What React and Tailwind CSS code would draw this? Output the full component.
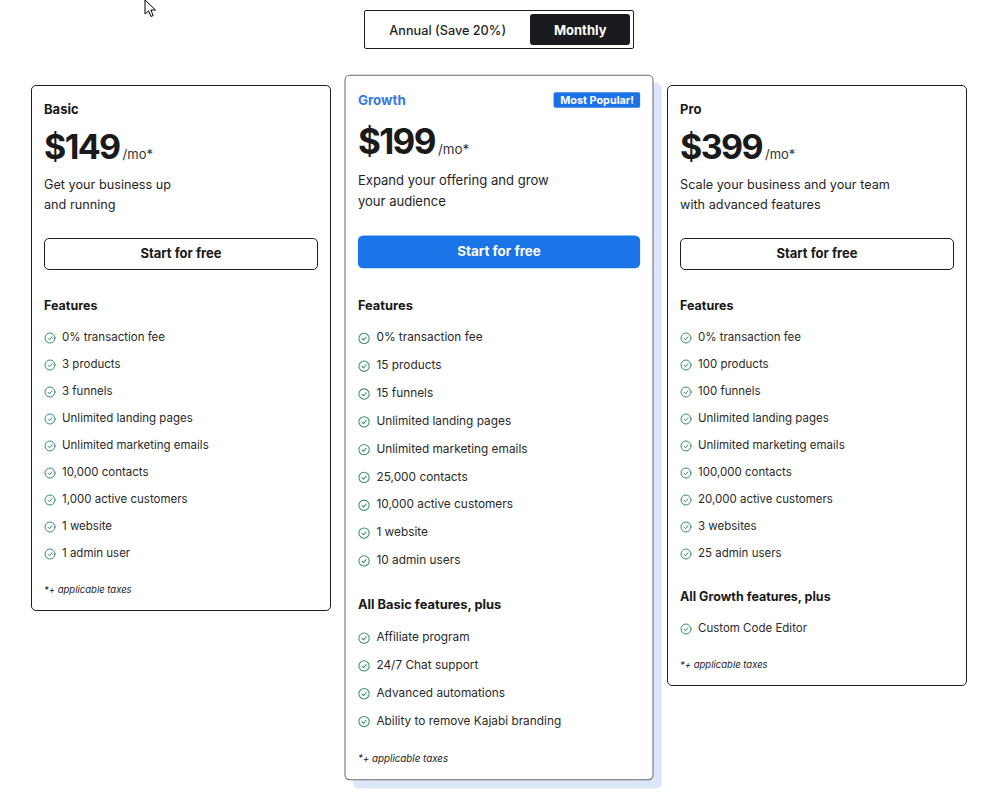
import React from "react";

const Check = () => (
  <svg width="12" height="12" viewBox="0 0 24 24" fill="none" stroke="#3b8c6e" strokeWidth="2" strokeLinecap="round" strokeLinejoin="round" className="shrink-0">
    <circle cx="12" cy="12" r="10" />
    <path d="m8 12.5 3 3 5-6" />
  </svg>
);

const Item = ({ children }) => (
  <li className="flex items-center gap-[6px] h-[20px] text-[11.5px] text-[#2a2a2a]">
    <Check />
    <span>{children}</span>
  </li>
);

const List = ({ items }) => (
  <ul className="mt-[12px] flex flex-col gap-[7px]">
    {items.map((t) => (
      <Item key={t}>{t}</Item>
    ))}
  </ul>
);

const Card = ({ name, price, desc, features, extraTitle, extra, featured }) => (
  <div
    className={
      "w-[300px] shrink-0 bg-white rounded-[5px] border px-[12px] pt-[13px] pb-[13px] flex flex-col " +
      (featured
        ? "border-[#6b6b6b] border-[1.5px] scale-[1.03] shadow-[8px_8px_0_#dce8f9]"
        : "border-[#1f1f1f]")
    }
  >
    {featured ? (
      <div className="flex items-center justify-between h-[23px] pb-[3px]">
        <span className="text-[13px] font-bold text-[#3a78e0] leading-[20px]">{name}</span>
        <span className="bg-[#1c73e8] text-white text-[10.5px] font-bold px-[6px] h-[15px] leading-[15px] rounded-[2px]">
          Most Popular!
        </span>
      </div>
    ) : (
      <div className="h-[20px] text-[13px] font-bold text-[#1a1a1a] leading-[20px]">{name}</div>
    )}
    <div className="mt-[8px] h-[40px] flex items-baseline">
      <span className="text-[34px] font-bold text-[#1a1a1a] leading-[40px] tracking-[-1.6px]">{price}</span>
      <span className="text-[13px] text-[#333] ml-[3px]">/mo*</span>
    </div>
    <p className="mt-[8px] text-[12.7px] leading-[20px] text-[#1f1f1f] whitespace-pre-line">{desc}</p>
    <button
      className={
        "mt-[23px] h-[32px] w-full rounded-[5px] text-[13px] font-bold " +
        (featured ? "bg-[#1c74e9] text-white" : "border border-[#1f1f1f] text-[#1a1a1a] bg-white")
      }
    >
      Start for free
    </button>
    <div className="mt-[26px] h-[20px] leading-[20px] text-[12.5px] font-bold text-[#1a1a1a]">Features</div>
    <List items={features} />
    {extraTitle && (
      <>
        <div className="mt-[23px] h-[20px] leading-[20px] text-[12.5px] font-bold text-[#1a1a1a]">{extraTitle}</div>
        <List items={extra} />
      </>
    )}
    <div className="mt-[19px] h-[14px] leading-[14px] text-[9.5px] italic text-[#222]">*+ applicable taxes</div>
  </div>
);

export default function App() {
  return (
    <div
      className="relative min-h-[807px] bg-white pt-[10px]"
      style={{ fontFamily: "Inter, 'Open Sans', sans-serif" }}
    >
      <svg className="absolute left-[144px] top-[-1px]" width="14" height="20" viewBox="0 0 14 20">
        <path d="M1 1 L1 15 L4.5 11.8 L7 17.5 L9.2 16.5 L6.8 11 L11.5 11 Z" fill="white" stroke="black" strokeWidth="1" strokeLinejoin="round" />
      </svg>
      <div className="ml-[31px] w-[936px] flex flex-col items-center">
        <div className="w-[270px] h-[39px] border border-[#1f1f1f] rounded-[2px] p-[3px] flex gap-[3px]">
          <button className="w-[160px] h-full pt-[2px] text-[12.7px] font-medium text-[#1f1f1f]">Annual (Save 20%)</button>
          <button className="w-[100px] h-full pt-[2px] bg-[#1b1b1f] rounded-[3px] text-white text-[13px] font-bold">Monthly</button>
        </div>
        <div className="mt-[36px] flex items-start gap-[18px] w-full">
          <Card
            name="Basic"
            price="$149"
            desc={"Get your business up\nand running"}
            features={[
              "0% transaction fee",
              "3 products",
              "3 funnels",
              "Unlimited landing pages",
              "Unlimited marketing emails",
              "10,000 contacts",
              "1,000 active customers",
              "1 website",
              "1 admin user",
            ]}
          />
          <Card
            featured
            name="Growth"
            price="$199"
            desc={"Expand your offering and grow\nyour audience"}
            features={[
              "0% transaction fee",
              "15 products",
              "15 funnels",
              "Unlimited landing pages",
              "Unlimited marketing emails",
              "25,000 contacts",
              "10,000 active customers",
              "1 website",
              "10 admin users",
            ]}
            extraTitle="All Basic features, plus"
            extra={[
              "Affiliate program",
              "24/7 Chat support",
              "Advanced automations",
              "Ability to remove Kajabi branding",
            ]}
          />
          <Card
            name="Pro"
            price="$399"
            desc={"Scale your business and your team\nwith advanced features"}
            features={[
              "0% transaction fee",
              "100 products",
              "100 funnels",
              "Unlimited landing pages",
              "Unlimited marketing emails",
              "100,000 contacts",
              "20,000 active customers",
              "3 websites",
              "25 admin users",
            ]}
            extraTitle="All Growth features, plus"
            extra={["Custom Code Editor"]}
          />
        </div>
      </div>
    </div>
  );
}
